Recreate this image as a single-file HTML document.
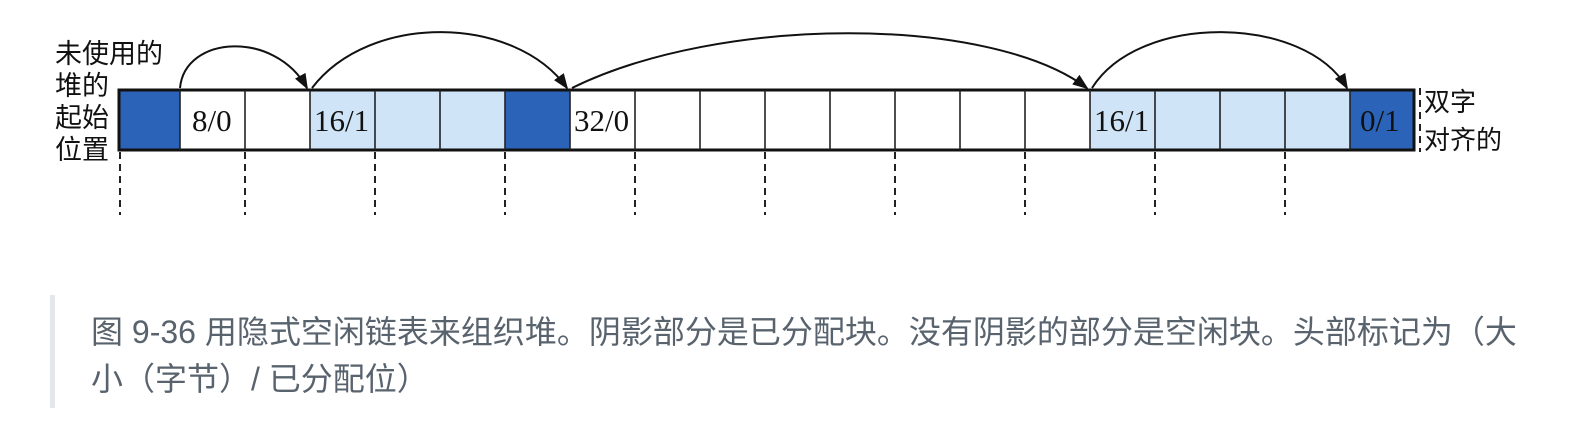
<!DOCTYPE html>
<html><head><meta charset="utf-8"><style>
html,body{margin:0;padding:0;background:#fff;width:1591px;height:423px;overflow:hidden;position:relative}
.lbl{position:absolute;font-family:"Noto Sans CJK SC",sans-serif;font-size:27px;line-height:32px;color:#111}
.cap{position:absolute;left:50px;top:295px;height:99px;padding-top:14px;border-left:5px solid #e3e6ea;padding-left:36px;font-family:"Liberation Sans","Noto Sans CJK SC",sans-serif;font-size:32px;line-height:47px;color:#59636e;width:1520px}
</style></head><body>
<svg width="1591" height="260" style="position:absolute;left:0;top:0">
<defs><marker id="a" markerWidth="16" markerHeight="12" refX="14" refY="6" orient="auto" markerUnits="userSpaceOnUse"><path d="M0,0 L16,6 L0,12Z" fill="#111"/></marker></defs>
<g>
<rect x="119" y="90" width="61" height="60" fill="#2a63b8"/>
<rect x="505" y="90" width="65" height="60" fill="#2a63b8"/>
<rect x="1350" y="90" width="64" height="60" fill="#2a63b8"/>
<rect x="310" y="90" width="195" height="60" fill="#cfe4f7"/>
<rect x="1090" y="90" width="260" height="60" fill="#cfe4f7"/>
<rect x="119" y="90" width="1295" height="60" fill="none" stroke="#111" stroke-width="3"/>
<g stroke="#222" stroke-width="1.6">
<line x1="180" y1="90" x2="180" y2="150"/><line x1="245" y1="90" x2="245" y2="150"/><line x1="310" y1="90" x2="310" y2="150"/><line x1="375" y1="90" x2="375" y2="150"/><line x1="440" y1="90" x2="440" y2="150"/><line x1="505" y1="90" x2="505" y2="150"/><line x1="570" y1="90" x2="570" y2="150"/><line x1="635" y1="90" x2="635" y2="150"/><line x1="700" y1="90" x2="700" y2="150"/><line x1="765" y1="90" x2="765" y2="150"/><line x1="830" y1="90" x2="830" y2="150"/><line x1="895" y1="90" x2="895" y2="150"/><line x1="960" y1="90" x2="960" y2="150"/><line x1="1025" y1="90" x2="1025" y2="150"/><line x1="1090" y1="90" x2="1090" y2="150"/><line x1="1155" y1="90" x2="1155" y2="150"/><line x1="1220" y1="90" x2="1220" y2="150"/><line x1="1285" y1="90" x2="1285" y2="150"/><line x1="1350" y1="90" x2="1350" y2="150"/>
</g>
<g stroke="#222" stroke-width="2" stroke-dasharray="7,5">
<line x1="120" y1="152" x2="120" y2="215"/><line x1="245" y1="152" x2="245" y2="215"/><line x1="375" y1="152" x2="375" y2="215"/><line x1="505" y1="152" x2="505" y2="215"/><line x1="635" y1="152" x2="635" y2="215"/><line x1="765" y1="152" x2="765" y2="215"/><line x1="895" y1="152" x2="895" y2="215"/><line x1="1025" y1="152" x2="1025" y2="215"/><line x1="1155" y1="152" x2="1155" y2="215"/><line x1="1285" y1="152" x2="1285" y2="215"/>
<line x1="1420" y1="88" x2="1420" y2="152"/>
</g>
<g fill="none" stroke="#111" stroke-width="2">
<path d="M180,88 C185,35 275,30 307,88" marker-end="url(#a)"/>
<path d="M312,88 C370,12 515,15 567,88" marker-end="url(#a)"/>
<path d="M572,88 C720,15 990,15 1087,88" marker-end="url(#a)"/>
<path d="M1092,88 C1140,12 1305,15 1347,88" marker-end="url(#a)"/>
</g>
<g font-family="Liberation Serif,serif" font-size="31" fill="#111">
<text x="192" y="131">8/0</text><text x="314" y="131">16/1</text><text x="574" y="131">32/0</text><text x="1094" y="131">16/1</text><text x="1360" y="131">0/1</text>
</g>
</g>
</svg>
<div class="lbl" style="left:55px;top:36px">未使用的<br>堆的<br>起始<br>位置</div>
<div class="lbl" style="left:1424px;top:82px;line-height:38px;font-size:26px">双字<br>对齐的</div>
<div class="cap">图 9-36 用隐式空闲链表来组织堆。阴影部分是已分配块。没有阴影的部分是空闲块。头部标记为（大<br>小（字节）/ 已分配位）</div>
</body></html>
